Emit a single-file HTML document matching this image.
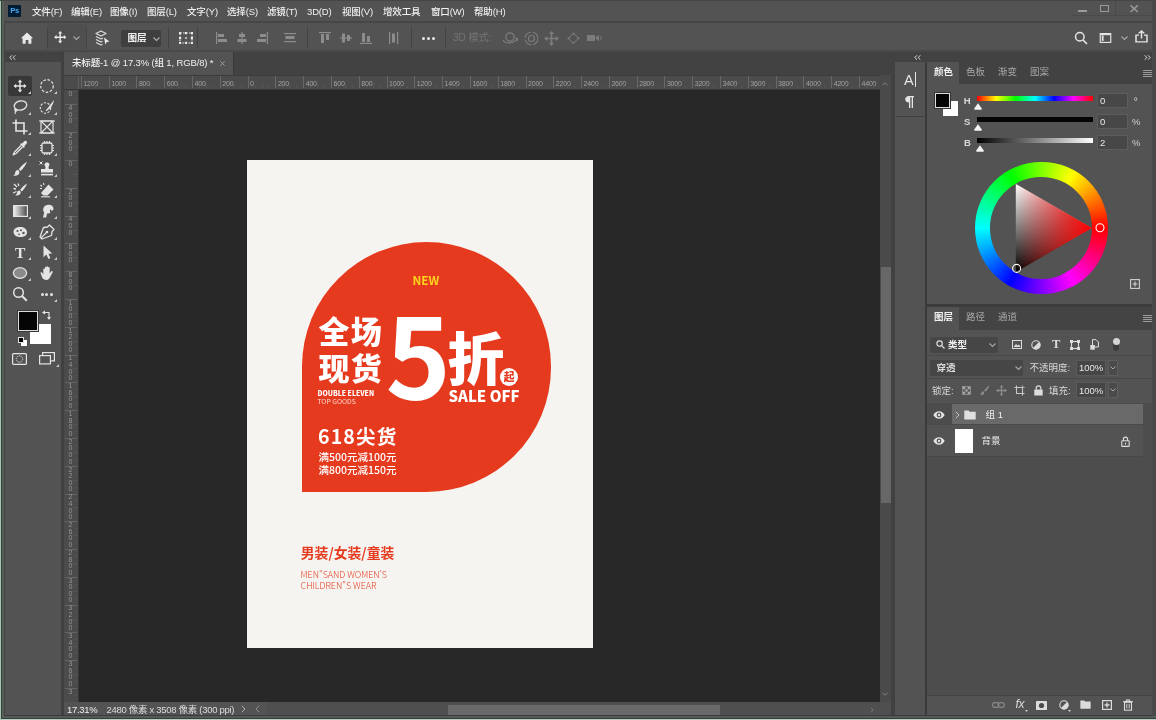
<!DOCTYPE html><html lang="zh"><head><meta charset="utf-8"><title>Photoshop</title><style>
*{box-sizing:border-box;margin:0;padding:0}
html,body{width:1156px;height:720px;overflow:hidden;background:#535353}
.t{will-change:opacity}
body{font-family:"Liberation Sans","Noto Sans CJK SC",sans-serif;font-size:11px;color:#dcdcdc;position:relative}
.a{position:absolute}
.t{position:absolute;white-space:nowrap;line-height:1}
svg{position:absolute;overflow:visible}
.sep{position:absolute;width:1px;background:#434343}
.dim{color:#8e8e8e}
</style></head><body>
<div class="a" style="left:0px;top:0px;width:1156px;height:720px;background:#535353;"></div>
<div class="a" style="left:0px;top:0px;width:1156px;height:22px;background:#535353;"></div>
<div class="a" style="left:0px;top:21px;width:1156px;height:1.7px;background:#464646;"></div>
<div class="a" style="left:8.2px;top:5px;width:13px;height:11.6px;background:#001c33;border-radius:1px"></div>
<div class="t" style="left:10.2px;top:6.8px;font-size:7.6px;color:#4aa8f0;font-weight:bold;letter-spacing:-0.3px">Ps</div>
<div class="t" style="left:32px;top:6.5px;font-size:9.5px;color:#f0f0f0;letter-spacing:-0.15px;font-weight:500">文件(F)</div>
<div class="t" style="left:71px;top:6.5px;font-size:9.5px;color:#f0f0f0;letter-spacing:-0.15px;font-weight:500">编辑(E)</div>
<div class="t" style="left:110px;top:6.5px;font-size:9.5px;color:#f0f0f0;letter-spacing:-0.15px;font-weight:500">图像(I)</div>
<div class="t" style="left:147px;top:6.5px;font-size:9.5px;color:#f0f0f0;letter-spacing:-0.15px;font-weight:500">图层(L)</div>
<div class="t" style="left:187px;top:6.5px;font-size:9.5px;color:#f0f0f0;letter-spacing:-0.15px;font-weight:500">文字(Y)</div>
<div class="t" style="left:227px;top:6.5px;font-size:9.5px;color:#f0f0f0;letter-spacing:-0.15px;font-weight:500">选择(S)</div>
<div class="t" style="left:267px;top:6.5px;font-size:9.5px;color:#f0f0f0;letter-spacing:-0.15px;font-weight:500">滤镜(T)</div>
<div class="t" style="left:307px;top:6.5px;font-size:9.5px;color:#f0f0f0;letter-spacing:-0.15px;font-weight:500">3D(D)</div>
<div class="t" style="left:342px;top:6.5px;font-size:9.5px;color:#f0f0f0;letter-spacing:-0.15px;font-weight:500">视图(V)</div>
<div class="t" style="left:383px;top:6.5px;font-size:9.5px;color:#f0f0f0;letter-spacing:-0.15px;font-weight:500">增效工具</div>
<div class="t" style="left:431px;top:6.5px;font-size:9.5px;color:#f0f0f0;letter-spacing:-0.15px;font-weight:500">窗口(W)</div>
<div class="t" style="left:474px;top:6.5px;font-size:9.5px;color:#f0f0f0;letter-spacing:-0.15px;font-weight:500">帮助(H)</div>
<div class="a" style="left:1077.5px;top:10px;width:9px;height:1.8px;background:#9a9a9a;"></div>
<div class="a" style="left:1100px;top:5.3px;width:9px;height:6.6px;border:1.2px solid #9a9a9a;border-top-width:1.8px"></div>
<svg style="left:1130px;top:4.6px" width="8.4" height="7.4" viewBox="0 0 8.4 7.4"><path d="M0.6 0.4L7.8 7M7.8 0.4L0.6 7" stroke="#9a9a9a" stroke-width="1.5" fill="none"/></svg>
<div class="a" style="left:1072px;top:15.3px;width:80px;height:0.7px;background:#4a4a4a;"></div>
<div class="a" style="left:1115px;top:0px;width:0.7px;height:16px;background:#4a4a4a;"></div>
<div class="a" style="left:0px;top:23px;width:1156px;height:29px;background:#535353;"></div>
<div class="a" style="left:0px;top:49.5px;width:1156px;height:2.5px;background:#494949;"></div>
<div class="sep" style="left:47px;top:27px;height:22px"></div>
<div class="sep" style="left:86px;top:27px;height:22px"></div>
<div class="sep" style="left:168px;top:27px;height:22px"></div>
<div class="sep" style="left:197px;top:27px;height:22px"></div>
<div class="sep" style="left:307px;top:27px;height:22px"></div>
<div class="sep" style="left:411px;top:27px;height:22px"></div>
<div class="sep" style="left:445px;top:27px;height:22px"></div>
<svg style="left:19.5px;top:31.7px" width="14" height="12.3" viewBox="0 0 15 14"><path d="M7.5 0.5L0.5 7H2.5V13.5H6V9H9V13.5H12.5V7H14.5Z" fill="#e8e8e8"/></svg>
<div class="a" style="left:48px;top:24px;width:38px;height:25px;background:#4f4f4f;"></div>
<svg style="left:53.7px;top:31.3px" width="12.4" height="12.4" viewBox="0 0 14 14"><path d="M7 0L9.4 2.9H7.8V6.2H11.1V4.6L14 7L11.1 9.4V7.8H7.8V11.1H9.4L7 14L4.6 11.1H6.2V7.8H2.9V9.4L0 7L2.9 4.6V6.2H6.2V2.9H4.6Z" fill="#e8e8e8"/></svg>
<svg style="left:73px;top:36px" width="7" height="5"><path d="M0.5 0.5L3.5 3.5L6.5 0.5" stroke="#a8a8a8" stroke-width="1.1" fill="none"/></svg>
<svg style="left:95px;top:30px" width="16" height="17" viewBox="0 0 16 17"><path d="M6 1L11 3.5L6 6L1 3.5Z M1 6.5L6 9L8 8M1 9.5L6 12L7.5 11.3M1 12.5L6 15L7.5 14.3" stroke="#dcdcdc" stroke-width="1.2" fill="none" stroke-linejoin="round"/><path d="M9 7.5L14.5 11.5L11.8 11.9L10.3 14.6Z" fill="#e8e8e8"/></svg>
<div class="a" style="left:121px;top:30px;width:40px;height:16.5px;background:#3f3f3f;border-radius:2px"></div>
<div class="t" style="left:127.5px;top:33.3px;font-size:9.6px;color:#f2f2f2;font-weight:bold">图层</div>
<svg style="left:153px;top:37px" width="7" height="5"><path d="M0.5 0.5L3.5 3.5L6.5 0.5" stroke="#b0b0b0" stroke-width="1.1" fill="none"/></svg>
<svg style="left:179px;top:32px" width="14" height="12" viewBox="0 0 14 12"><path d="M1 1H13V11H1Z" stroke="#dcdcdc" stroke-width="1.2" fill="none" stroke-dasharray="1.6 1.4"/><g fill="#e8e8e8"><rect x="0" y="0" width="2.2" height="2.2"/><rect x="11.8" y="0" width="2.2" height="2.2"/><rect x="0" y="9.8" width="2.2" height="2.2"/><rect x="11.8" y="9.8" width="2.2" height="2.2"/><rect x="5.9" y="0" width="2.2" height="2.2"/><rect x="5.9" y="9.8" width="2.2" height="2.2"/><rect x="0" y="4.9" width="2.2" height="2.2"/><rect x="11.8" y="4.9" width="2.2" height="2.2"/><rect x="6.2" y="5.2" width="1.6" height="1.6"/></g></svg>
<svg style="left:216px;top:32px" width="12" height="12" viewBox="0 0 12 12"><rect x="0" y="0" width="1.2" height="12" fill="#8c8c8c"/><rect x="2" y="2" width="6" height="3" fill="#8c8c8c"/><rect x="2" y="7" width="9" height="3" fill="#8c8c8c"/></svg>
<svg style="left:236px;top:32px" width="12" height="12" viewBox="0 0 12 12"><rect x="5.4" y="0" width="1.2" height="12" fill="#8c8c8c"/><rect x="3" y="2" width="6" height="3" fill="#8c8c8c"/><rect x="1.5" y="7" width="9" height="3" fill="#8c8c8c"/></svg>
<svg style="left:256px;top:32px" width="12" height="12" viewBox="0 0 12 12"><rect x="10.8" y="0" width="1.2" height="12" fill="#8c8c8c"/><rect x="4" y="2" width="6" height="3" fill="#8c8c8c"/><rect x="1" y="7" width="9" height="3" fill="#8c8c8c"/></svg>
<svg style="left:284px;top:32px" width="12" height="12" viewBox="0 0 12 12"><rect x="0" y="1" width="12" height="1.2" fill="#8c8c8c"/><rect x="1.5" y="4" width="9" height="3" fill="#8c8c8c"/><rect x="0" y="9" width="12" height="1.2" fill="#8c8c8c"/></svg>
<svg style="left:319px;top:32px" width="12" height="12" viewBox="0 0 12 12"><rect x="0" y="0" width="12" height="1.2" fill="#8c8c8c"/><rect x="2" y="2" width="3" height="9" fill="#8c8c8c"/><rect x="7" y="2" width="3" height="6" fill="#8c8c8c"/></svg>
<svg style="left:340px;top:32px" width="12" height="12" viewBox="0 0 12 12"><rect x="0" y="5.4" width="12" height="1.2" fill="#8c8c8c"/><rect x="2" y="1.5" width="3" height="9" fill="#8c8c8c"/><rect x="7" y="3" width="3" height="6" fill="#8c8c8c"/></svg>
<svg style="left:360px;top:32px" width="12" height="12" viewBox="0 0 12 12"><rect x="0" y="10.8" width="12" height="1.2" fill="#8c8c8c"/><rect x="2" y="1" width="3" height="9" fill="#8c8c8c"/><rect x="7" y="4" width="3" height="6" fill="#8c8c8c"/></svg>
<svg style="left:388px;top:32px" width="12" height="12" viewBox="0 0 12 12"><rect x="1" y="0" width="1.2" height="12" fill="#8c8c8c"/><rect x="4" y="1.5" width="3" height="9" fill="#8c8c8c"/><rect x="9" y="0" width="1.2" height="12" fill="#8c8c8c"/></svg>
<div class="a" style="left:422px;top:36.5px;width:3px;height:3px;border-radius:50%;background:#e8e8e8"></div>
<div class="a" style="left:427px;top:36.5px;width:3px;height:3px;border-radius:50%;background:#e8e8e8"></div>
<div class="a" style="left:432px;top:36.5px;width:3px;height:3px;border-radius:50%;background:#e8e8e8"></div>
<div class="t" style="left:453px;top:33px;font-size:10px;color:#757575;">3D 模式:</div>
<svg style="left:502px;top:31px" width="16" height="14" viewBox="0 0 16 14"><circle cx="8" cy="6" r="4.2" stroke="#7c7c7c" stroke-width="1.2" fill="none"/><path d="M1 9C3 13 12 13 15 8M13 7L15.5 7.5L15 10" stroke="#7c7c7c" stroke-width="1.2" fill="none"/></svg>
<svg style="left:524px;top:31px" width="15" height="15" viewBox="0 0 15 15"><circle cx="7.5" cy="7.5" r="6.3" stroke="#7c7c7c" stroke-width="1.2" fill="none" stroke-dasharray="8 2"/><circle cx="7.5" cy="7.5" r="3" stroke="#7c7c7c" stroke-width="1.2" fill="none"/></svg>
<svg style="left:544px;top:31px" width="15" height="15" viewBox="0 0 14 14"><path d="M7 0L9.4 2.9H7.8V6.2H11.1V4.6L14 7L11.1 9.4V7.8H7.8V11.1H9.4L7 14L4.6 11.1H6.2V7.8H2.9V9.4L0 7L2.9 4.6V6.2H6.2V2.9H4.6Z" fill="#7c7c7c"/></svg>
<svg style="left:566.5px;top:32px" width="13" height="12.5" viewBox="0 0 16 15"><path d="M8 1L14 7.5L8 14L2 7.5Z" stroke="#7c7c7c" stroke-width="1.2" fill="none"/><path d="M8 0L10 3H6ZM8 15L10 12H6ZM0 7.5L3 5.5V9.5ZM16 7.5L13 5.5V9.5Z" fill="#7c7c7c"/></svg>
<svg style="left:587px;top:34px" width="15" height="8" viewBox="0 0 15 8"><rect x="0" y="1" width="8" height="6" fill="#7c7c7c"/><path d="M8 4L12 1V7Z" fill="#7c7c7c"/><path d="M13 1.5C14.5 3 14.5 5 13 6.5" stroke="#7c7c7c" stroke-width="1" fill="none"/></svg>
<svg style="left:1074px;top:31px" width="14" height="14" viewBox="0 0 14 14"><circle cx="5.8" cy="5.8" r="4.3" stroke="#e4e4e4" stroke-width="1.5" fill="none"/><path d="M9 9L13 13" stroke="#e4e4e4" stroke-width="1.7"/></svg>
<svg style="left:1099px;top:33.2px" width="13" height="10" viewBox="0 0 14 12"><rect x="0.7" y="0.7" width="12.6" height="10.6" stroke="#e4e4e4" stroke-width="1.4" fill="none"/><rect x="2.5" y="3" width="2.2" height="6.5" fill="#e4e4e4"/><rect x="1" y="1" width="12" height="1.6" fill="#e4e4e4"/></svg>
<svg style="left:1120.5px;top:35.5px" width="7" height="5"><path d="M0.5 0.5L3.5 3.5L6.5 0.5" stroke="#a8a8a8" stroke-width="1.1" fill="none"/></svg>
<svg style="left:1135px;top:30.3px" width="13" height="12.8" viewBox="0 0 13 15" preserveAspectRatio="none"><path d="M4 6H1V14H12V6H9" stroke="#e4e4e4" stroke-width="1.5" fill="none"/><path d="M6.5 10V1.5M3.7 4L6.5 1.2L9.3 4" stroke="#e4e4e4" stroke-width="1.5" fill="none"/></svg>
<div class="a" style="left:3px;top:52px;width:60px;height:666px;background:#535353;"></div>
<div class="a" style="left:3px;top:52px;width:60px;height:10px;background:#424242;"></div>
<div class="a" style="left:61px;top:52px;width:3px;height:666px;background:#404040;"></div>
<svg style="left:9px;top:54.5px" width="7" height="5"><path d="M3 0.3L0.8 2.5L3 4.7M6.3 0.3L4.1 2.5L6.3 4.7" stroke="#dcdcdc" stroke-width="1" fill="none"/></svg>
<div class="a" style="left:8px;top:76px;width:24px;height:20px;background:#383838;border-radius:2px"></div>
<svg style="left:12.0px;top:78.0px" width="16" height="16" viewBox="0 0 16 16"><path transform="translate(1.5 1.5) scale(0.93)" d="M7 0L9.4 2.9H7.8V6.2H11.1V4.6L14 7L11.1 9.4V7.8H7.8V11.1H9.4L7 14L4.6 11.1H6.2V7.8H2.9V9.4L0 7L2.9 4.6V6.2H6.2V2.9H4.6Z" fill="#e4e4e4"/></svg>
<svg style="left:27.5px;top:91px" width="3" height="3"><path d="M3 0V3H0Z" fill="#c8c8c8"/></svg>
<svg style="left:38.5px;top:78.0px" width="16" height="16" viewBox="0 0 16 16"><ellipse cx="8" cy="8" rx="6.3" ry="6.3" stroke="#e4e4e4" stroke-width="1.2" fill="none" stroke-dasharray="2.6 1.6"/></svg>
<svg style="left:54.0px;top:91px" width="3" height="3"><path d="M3 0V3H0Z" fill="#c8c8c8"/></svg>
<svg style="left:12.0px;top:99.0px" width="16" height="16" viewBox="0 0 16 16"><ellipse cx="8.5" cy="6.5" rx="6.3" ry="4.6" stroke="#e4e4e4" stroke-width="1.3" fill="none" transform="rotate(-12 8.5 6.5)"/><path d="M3.5 9.5C2 11 3.2 12.5 4.5 12C5.5 11.5 4.8 10 3.8 10.6C3 11.4 3.5 13.5 3 15" stroke="#e4e4e4" stroke-width="1.1" fill="none"/></svg>
<svg style="left:27.5px;top:112px" width="3" height="3"><path d="M3 0V3H0Z" fill="#c8c8c8"/></svg>
<svg style="left:38.5px;top:99.0px" width="16" height="16" viewBox="0 0 16 16"><ellipse cx="6.5" cy="9" rx="5.2" ry="5.2" stroke="#e4e4e4" stroke-width="1.1" fill="none" stroke-dasharray="2.2 1.5"/><path d="M15 1C13 3.5 11 6 9.2 8.6L7.2 10.8C6.4 11.8 7 12.4 8 11.8L10.6 9.8C13 7.5 14.5 4.5 15 1Z" fill="#e4e4e4"/></svg>
<svg style="left:54.0px;top:112px" width="3" height="3"><path d="M3 0V3H0Z" fill="#c8c8c8"/></svg>
<svg style="left:12.0px;top:119.0px" width="16" height="16" viewBox="0 0 16 16"><path d="M4 0.5V12H15.5M0.5 4H12V15.5" stroke="#e4e4e4" stroke-width="1.6" fill="none"/></svg>
<svg style="left:27.5px;top:132px" width="3" height="3"><path d="M3 0V3H0Z" fill="#c8c8c8"/></svg>
<svg style="left:38.5px;top:119.0px" width="16" height="16" viewBox="0 0 16 16"><rect x="2" y="2" width="12" height="12" stroke="#e4e4e4" stroke-width="1.2" fill="none"/><path d="M2 2L14 14M14 2L2 14M0 2H16M0 14H16" stroke="#e4e4e4" stroke-width="1.1" fill="none"/></svg>
<svg style="left:12.0px;top:140.0px" width="16" height="16" viewBox="0 0 16 16"><path d="M13.8 0.8C15.2 1.2 15.4 3 14.4 4L12.3 6.1L12.9 6.8L11.8 7.9L8.1 4.2L9.2 3.1L9.9 3.7L12 1.6C12.5 1 13.2 0.7 13.8 0.8Z" fill="#e4e4e4"/><path d="M9 5.5L2.5 12L1.2 14.8L4 13.5L10.5 7" stroke="#e4e4e4" stroke-width="1.3" fill="none" stroke-linejoin="round"/></svg>
<svg style="left:27.5px;top:153px" width="3" height="3"><path d="M3 0V3H0Z" fill="#c8c8c8"/></svg>
<svg style="left:38.5px;top:140.0px" width="16" height="16" viewBox="0 0 16 16"><rect x="3" y="3" width="10" height="10" rx="1.5" stroke="#e4e4e4" stroke-width="1.3" fill="none"/><path d="M5.5 1V3M8 1V3M10.5 1V3M5.5 13V15M8 13V15M10.5 13V15M1 5.5H3M1 8H3M1 10.5H3M13 5.5H15M13 8H15M13 10.5H15" stroke="#e4e4e4" stroke-width="1.2"/></svg>
<svg style="left:54.0px;top:153px" width="3" height="3"><path d="M3 0V3H0Z" fill="#c8c8c8"/></svg>
<svg style="left:12.0px;top:161.0px" width="16" height="16" viewBox="0 0 16 16"><path d="M15 0.8C12 2.5 9 5.5 6.8 8.2L8.6 10C11.2 7.6 13.8 4.4 15 0.8Z" fill="#e4e4e4"/><path d="M6 9C4 9 3.3 10.5 3.1 12C3 13.3 2.2 14.2 1 14.6C3.5 15.3 6.3 14.6 7.2 12.6C7.8 11.2 7.2 9.6 6 9Z" fill="#e4e4e4"/></svg>
<svg style="left:27.5px;top:174px" width="3" height="3"><path d="M3 0V3H0Z" fill="#c8c8c8"/></svg>
<svg style="left:38.5px;top:161.0px" width="16" height="16" viewBox="0 0 16 16"><path d="M6.2 5.2C5 4 5.5 1.5 8 1.5C10.5 1.5 11 4 9.8 5.2C9.3 6.2 9.5 7.4 10 8H14V11.5H2V8H6C6.5 7.4 6.7 6.2 6.2 5.2Z" fill="#e4e4e4"/><rect x="2" y="12.8" width="12" height="1.6" fill="#e4e4e4"/><path d="M0.5 0.5L3.5 3.5M3.5 0.5L0.5 3.5" stroke="#e4e4e4" stroke-width="1"/></svg>
<svg style="left:54.0px;top:174px" width="3" height="3"><path d="M3 0V3H0Z" fill="#c8c8c8"/></svg>
<svg style="left:12.0px;top:182.0px" width="16" height="16" viewBox="0 0 16 16"><path d="M15 1.5C12.5 3 10 5.5 8.2 7.8L9.8 9.4C12 7.2 14 4.6 15 1.5Z" fill="#e4e4e4"/><path d="M7.5 8.5C5.8 8.5 5.2 9.8 5 11C4.9 12 4.2 12.8 3.2 13.2C5.3 13.8 7.7 13.2 8.5 11.5C9 10.3 8.5 9 7.5 8.5Z" fill="#e4e4e4"/><path d="M2 2L5 5M6 1.5L7 4M1.5 6.5L4 7" stroke="#e4e4e4" stroke-width="1.3"/><path d="M1 11L4.5 9.5" stroke="#e4e4e4" stroke-width="1.2"/></svg>
<svg style="left:27.5px;top:195px" width="3" height="3"><path d="M3 0V3H0Z" fill="#c8c8c8"/></svg>
<svg style="left:38.5px;top:182.0px" width="16" height="16" viewBox="0 0 16 16"><path d="M9.5 2.5L14.5 7.5L8.5 13.5H4.5L2 11Z" fill="#e4e4e4"/><path d="M2 14.8H11" stroke="#e4e4e4" stroke-width="1.1"/><path d="M1.5 3L3 4.5M4.5 1L5 3M1 6.5L3 6.5" stroke="#e4e4e4" stroke-width="1.1"/></svg>
<svg style="left:54.0px;top:195px" width="3" height="3"><path d="M3 0V3H0Z" fill="#c8c8c8"/></svg>
<svg style="left:12.5px;top:205px" width="15" height="12"><defs><linearGradient id="gg" x1="0" x2="1" y1="0" y2="0"><stop offset="0" stop-color="#f0f0f0"/><stop offset="1" stop-color="#4a4a4a"/></linearGradient></defs><rect x="0.6" y="0.6" width="13.8" height="10.8" fill="url(#gg)" stroke="#e4e4e4" stroke-width="1.2"/></svg>
<svg style="left:27.5px;top:216px" width="3" height="3"><path d="M3 0V3H0Z" fill="#c8c8c8"/></svg>
<svg style="left:38.5px;top:203.0px" width="16" height="16" viewBox="0 0 16 16"><path d="M4 14.5L5.2 9.5C3.5 7.5 4 4 6.5 2.5C9 1 12.5 1.5 13.8 3.5C15 5.5 14.5 7 13.5 7.5C12.5 8 11.6 7.2 11.8 6.2C10.5 6.5 10.5 8.5 11.5 9.2C10.5 10.6 9 10.8 8 10.4L7.2 14.5Z" fill="#e4e4e4"/></svg>
<svg style="left:54.0px;top:216px" width="3" height="3"><path d="M3 0V3H0Z" fill="#c8c8c8"/></svg>
<svg style="left:12.0px;top:224.0px" width="16" height="16" viewBox="0 0 16 16"><path d="M1.5 8C1.5 4.5 4.5 3 8 3C12 3 15 5 15 8.5C15 11.5 12 13 8.5 13C4.5 13 1.5 11 1.5 8Z" fill="#e4e4e4"/><circle cx="5.5" cy="7" r="1.1" fill="#535353"/><circle cx="9" cy="6.2" r="1" fill="#535353"/><circle cx="11.5" cy="9" r="1.2" fill="#535353"/><circle cx="7" cy="10.3" r="0.9" fill="#535353"/></svg>
<svg style="left:27.5px;top:237px" width="3" height="3"><path d="M3 0V3H0Z" fill="#c8c8c8"/></svg>
<svg style="left:38.5px;top:224.0px" width="16" height="16" viewBox="0 0 16 16"><path d="M10.5 1L15 5.5L13 7.5L12.5 11.5L3 15L1 13L4.5 3.5L8.5 3Z" stroke="#e4e4e4" stroke-width="1.3" fill="none" stroke-linejoin="round"/><path d="M2 14L7.5 8.5" stroke="#e4e4e4" stroke-width="1.1"/><circle cx="8" cy="8" r="1.3" fill="#e4e4e4"/></svg>
<svg style="left:54.0px;top:237px" width="3" height="3"><path d="M3 0V3H0Z" fill="#c8c8c8"/></svg>
<div class="t" style="left:15px;top:244.5px;font-family:'Liberation Serif',serif;font-size:15.5px;font-weight:bold;color:#e4e4e4">T</div>
<svg style="left:27.5px;top:257px" width="3" height="3"><path d="M3 0V3H0Z" fill="#c8c8c8"/></svg>
<svg style="left:38.5px;top:244.0px" width="16" height="16" viewBox="0 0 16 16"><path d="M4.5 1.5V13.2L7.4 10.6L9.4 15L11.4 14.1L9.4 9.8L13.2 9.6Z" fill="#e4e4e4"/></svg>
<svg style="left:54.0px;top:257px" width="3" height="3"><path d="M3 0V3H0Z" fill="#c8c8c8"/></svg>
<svg style="left:12.0px;top:265.0px" width="16" height="16" viewBox="0 0 16 16"><ellipse cx="8" cy="8" rx="6.6" ry="5.3" fill="#8a8a8a" stroke="#e4e4e4" stroke-width="1.3"/></svg>
<svg style="left:27.5px;top:278px" width="3" height="3"><path d="M3 0V3H0Z" fill="#c8c8c8"/></svg>
<svg style="left:38.5px;top:265.0px" width="16" height="16" viewBox="0 0 16 16"><path d="M4.3 9.5V4.2C4.3 3.2 5.9 3.2 5.9 4.2V2.6C5.9 1.6 7.5 1.6 7.5 2.6V2C7.5 1 9.1 1 9.1 2V2.8C9.1 1.8 10.7 1.8 10.7 2.8V8.2L12.2 6.4C13 5.5 14.3 6.4 13.6 7.5L11 12.2C10.3 13.8 9.2 15 7.4 15C5 15 3.4 13.6 2.8 11.6L1.6 8.2C1.3 7.2 2.6 6.8 3.1 7.6Z" fill="#e4e4e4"/></svg>
<svg style="left:12.0px;top:286.0px" width="16" height="16" viewBox="0 0 16 16"><circle cx="6.5" cy="6.5" r="4.8" stroke="#e4e4e4" stroke-width="1.5" fill="none"/><path d="M10 10L14.8 14.8" stroke="#e4e4e4" stroke-width="2"/></svg>
<div class="a" style="left:40.5px;top:292.5px;width:3px;height:3px;border-radius:50%;background:#e4e4e4"></div>
<div class="a" style="left:45.3px;top:292.5px;width:3px;height:3px;border-radius:50%;background:#e4e4e4"></div>
<div class="a" style="left:50.1px;top:292.5px;width:3px;height:3px;border-radius:50%;background:#e4e4e4"></div>
<svg style="left:54.0px;top:299px" width="3" height="3"><path d="M3 0V3H0Z" fill="#c8c8c8"/></svg>
<div class="a" style="left:30px;top:323.5px;width:20.5px;height:20px;background:#ffffff;"></div>
<div class="a" style="left:18px;top:311px;width:20px;height:19.5px;background:#050505;border:1.2px solid #dcdcdc;box-shadow:0 0 0 1px #3a3a3a"></div>
<svg style="left:42px;top:310px" width="10" height="10" viewBox="0 0 10 10"><path d="M2 2.5H7V8" stroke="#e4e4e4" stroke-width="1.1" fill="none"/><path d="M0 2.5L3 0.5V4.5ZM7 10L5 7H9Z" fill="#e4e4e4"/></svg>
<div class="a" style="left:21px;top:340px;width:5.5px;height:5.5px;background:#ffffff;"></div>
<div class="a" style="left:17.5px;top:336.5px;width:6px;height:6px;background:#050505;border:1px solid #e0e0e0"></div>
<svg style="left:12px;top:353px" width="15" height="12" viewBox="0 0 15 12"><rect x="0.6" y="0.6" width="13.8" height="10.8" rx="1" stroke="#e4e4e4" stroke-width="1.2" fill="none"/><circle cx="7.5" cy="6" r="3.2" stroke="#e4e4e4" stroke-width="1" fill="none" stroke-dasharray="1.4 1"/></svg>
<svg style="left:39px;top:352px" width="16" height="13" viewBox="0 0 16 13"><rect x="3.6" y="0.6" width="11.8" height="8.3" stroke="#e4e4e4" stroke-width="1.2" fill="#535353"/><rect x="0.6" y="3.6" width="10.8" height="8.3" stroke="#e4e4e4" stroke-width="1.2" fill="#535353"/></svg>
<svg style="left:56px;top:364px" width="3" height="3"><path d="M3 0V3H0Z" fill="#c8c8c8"/></svg>
<div class="a" style="left:64px;top:52px;width:830px;height:23px;background:#424242;"></div>
<div class="a" style="left:64px;top:52px;width:169px;height:23px;background:#535353;"></div>
<div class="a" style="left:233px;top:52px;width:1px;height:23px;background:#383838;"></div>
<div class="t" style="left:72px;top:58px;font-size:9.5px;color:#f0f0f0;letter-spacing:-0.14px;font-weight:500">未标题-1 @ 17.3% (组 1, RGB/8) *</div>
<svg style="left:220px;top:61px" width="5" height="5"><path d="M0.3 0.3L4.7 4.7M4.7 0.3L0.3 4.7" stroke="#a4a4a4" stroke-width="0.9" fill="none"/></svg>
<div class="a" style="left:64px;top:75px;width:816px;height:627px;background:#282828;"></div>
<div class="a" style="left:64px;top:75px;width:816px;height:14.5px;background:#4b4b4b;"></div>
<div class="a" style="left:64px;top:75px;width:14.5px;height:627px;background:#4b4b4b;"></div>
<div class="a" style="left:64px;top:88.5px;width:816px;height:1px;background:#383838;"></div>
<div class="a" style="left:77.5px;top:75px;width:1px;height:627px;background:#383838;"></div>
<div class="a" style="left:64px;top:75px;width:816px;height:0.7px;background:#3c3c3c;"></div>
<div class="a" style="left:80.9px;top:76px;width:1px;height:12px;background:#686868;"></div>
<div class="t" style="left:83.4px;top:80px;font-size:7px;color:#a2a2a2;letter-spacing:-0.2px">1200</div>
<div class="a" style="left:87.8px;top:86px;width:1px;height:2px;background:#575757;"></div>
<div class="a" style="left:94.8px;top:84px;width:1px;height:4px;background:#575757;"></div>
<div class="a" style="left:101.7px;top:86px;width:1px;height:2px;background:#575757;"></div>
<div class="a" style="left:108.7px;top:76px;width:1px;height:12px;background:#686868;"></div>
<div class="t" style="left:111.2px;top:80px;font-size:7px;color:#a2a2a2;letter-spacing:-0.2px">1000</div>
<div class="a" style="left:115.6px;top:86px;width:1px;height:2px;background:#575757;"></div>
<div class="a" style="left:122.5px;top:84px;width:1px;height:4px;background:#575757;"></div>
<div class="a" style="left:129.5px;top:86px;width:1px;height:2px;background:#575757;"></div>
<div class="a" style="left:136.4px;top:76px;width:1px;height:12px;background:#686868;"></div>
<div class="t" style="left:138.9px;top:80px;font-size:7px;color:#a2a2a2;letter-spacing:-0.2px">800</div>
<div class="a" style="left:143.4px;top:86px;width:1px;height:2px;background:#575757;"></div>
<div class="a" style="left:150.3px;top:84px;width:1px;height:4px;background:#575757;"></div>
<div class="a" style="left:157.3px;top:86px;width:1px;height:2px;background:#575757;"></div>
<div class="a" style="left:164.2px;top:76px;width:1px;height:12px;background:#686868;"></div>
<div class="t" style="left:166.7px;top:80px;font-size:7px;color:#a2a2a2;letter-spacing:-0.2px">600</div>
<div class="a" style="left:171.2px;top:86px;width:1px;height:2px;background:#575757;"></div>
<div class="a" style="left:178.1px;top:84px;width:1px;height:4px;background:#575757;"></div>
<div class="a" style="left:185.1px;top:86px;width:1px;height:2px;background:#575757;"></div>
<div class="a" style="left:192.0px;top:76px;width:1px;height:12px;background:#686868;"></div>
<div class="t" style="left:194.5px;top:80px;font-size:7px;color:#a2a2a2;letter-spacing:-0.2px">400</div>
<div class="a" style="left:199.0px;top:86px;width:1px;height:2px;background:#575757;"></div>
<div class="a" style="left:205.9px;top:84px;width:1px;height:4px;background:#575757;"></div>
<div class="a" style="left:212.9px;top:86px;width:1px;height:2px;background:#575757;"></div>
<div class="a" style="left:219.8px;top:76px;width:1px;height:12px;background:#686868;"></div>
<div class="t" style="left:222.3px;top:80px;font-size:7px;color:#a2a2a2;letter-spacing:-0.2px">200</div>
<div class="a" style="left:226.8px;top:86px;width:1px;height:2px;background:#575757;"></div>
<div class="a" style="left:233.7px;top:84px;width:1px;height:4px;background:#575757;"></div>
<div class="a" style="left:240.7px;top:86px;width:1px;height:2px;background:#575757;"></div>
<div class="a" style="left:247.6px;top:76px;width:1px;height:12px;background:#686868;"></div>
<div class="t" style="left:250.1px;top:80px;font-size:7px;color:#a2a2a2;letter-spacing:-0.2px">0</div>
<div class="a" style="left:254.5px;top:86px;width:1px;height:2px;background:#575757;"></div>
<div class="a" style="left:261.5px;top:84px;width:1px;height:4px;background:#575757;"></div>
<div class="a" style="left:268.4px;top:86px;width:1px;height:2px;background:#575757;"></div>
<div class="a" style="left:275.4px;top:76px;width:1px;height:12px;background:#686868;"></div>
<div class="t" style="left:277.9px;top:80px;font-size:7px;color:#a2a2a2;letter-spacing:-0.2px">200</div>
<div class="a" style="left:282.3px;top:86px;width:1px;height:2px;background:#575757;"></div>
<div class="a" style="left:289.3px;top:84px;width:1px;height:4px;background:#575757;"></div>
<div class="a" style="left:296.2px;top:86px;width:1px;height:2px;background:#575757;"></div>
<div class="a" style="left:303.2px;top:76px;width:1px;height:12px;background:#686868;"></div>
<div class="t" style="left:305.7px;top:80px;font-size:7px;color:#a2a2a2;letter-spacing:-0.2px">400</div>
<div class="a" style="left:310.1px;top:86px;width:1px;height:2px;background:#575757;"></div>
<div class="a" style="left:317.1px;top:84px;width:1px;height:4px;background:#575757;"></div>
<div class="a" style="left:324.0px;top:86px;width:1px;height:2px;background:#575757;"></div>
<div class="a" style="left:331.0px;top:76px;width:1px;height:12px;background:#686868;"></div>
<div class="t" style="left:333.5px;top:80px;font-size:7px;color:#a2a2a2;letter-spacing:-0.2px">600</div>
<div class="a" style="left:337.9px;top:86px;width:1px;height:2px;background:#575757;"></div>
<div class="a" style="left:344.9px;top:84px;width:1px;height:4px;background:#575757;"></div>
<div class="a" style="left:351.8px;top:86px;width:1px;height:2px;background:#575757;"></div>
<div class="a" style="left:358.8px;top:76px;width:1px;height:12px;background:#686868;"></div>
<div class="t" style="left:361.3px;top:80px;font-size:7px;color:#a2a2a2;letter-spacing:-0.2px">800</div>
<div class="a" style="left:365.7px;top:86px;width:1px;height:2px;background:#575757;"></div>
<div class="a" style="left:372.7px;top:84px;width:1px;height:4px;background:#575757;"></div>
<div class="a" style="left:379.6px;top:86px;width:1px;height:2px;background:#575757;"></div>
<div class="a" style="left:386.5px;top:76px;width:1px;height:12px;background:#686868;"></div>
<div class="t" style="left:389.0px;top:80px;font-size:7px;color:#a2a2a2;letter-spacing:-0.2px">1000</div>
<div class="a" style="left:393.5px;top:86px;width:1px;height:2px;background:#575757;"></div>
<div class="a" style="left:400.4px;top:84px;width:1px;height:4px;background:#575757;"></div>
<div class="a" style="left:407.4px;top:86px;width:1px;height:2px;background:#575757;"></div>
<div class="a" style="left:414.3px;top:76px;width:1px;height:12px;background:#686868;"></div>
<div class="t" style="left:416.8px;top:80px;font-size:7px;color:#a2a2a2;letter-spacing:-0.2px">1200</div>
<div class="a" style="left:421.3px;top:86px;width:1px;height:2px;background:#575757;"></div>
<div class="a" style="left:428.2px;top:84px;width:1px;height:4px;background:#575757;"></div>
<div class="a" style="left:435.2px;top:86px;width:1px;height:2px;background:#575757;"></div>
<div class="a" style="left:442.1px;top:76px;width:1px;height:12px;background:#686868;"></div>
<div class="t" style="left:444.6px;top:80px;font-size:7px;color:#a2a2a2;letter-spacing:-0.2px">1400</div>
<div class="a" style="left:449.1px;top:86px;width:1px;height:2px;background:#575757;"></div>
<div class="a" style="left:456.0px;top:84px;width:1px;height:4px;background:#575757;"></div>
<div class="a" style="left:463.0px;top:86px;width:1px;height:2px;background:#575757;"></div>
<div class="a" style="left:469.9px;top:76px;width:1px;height:12px;background:#686868;"></div>
<div class="t" style="left:472.4px;top:80px;font-size:7px;color:#a2a2a2;letter-spacing:-0.2px">1600</div>
<div class="a" style="left:476.9px;top:86px;width:1px;height:2px;background:#575757;"></div>
<div class="a" style="left:483.8px;top:84px;width:1px;height:4px;background:#575757;"></div>
<div class="a" style="left:490.8px;top:86px;width:1px;height:2px;background:#575757;"></div>
<div class="a" style="left:497.7px;top:76px;width:1px;height:12px;background:#686868;"></div>
<div class="t" style="left:500.2px;top:80px;font-size:7px;color:#a2a2a2;letter-spacing:-0.2px">1800</div>
<div class="a" style="left:504.7px;top:86px;width:1px;height:2px;background:#575757;"></div>
<div class="a" style="left:511.6px;top:84px;width:1px;height:4px;background:#575757;"></div>
<div class="a" style="left:518.6px;top:86px;width:1px;height:2px;background:#575757;"></div>
<div class="a" style="left:525.5px;top:76px;width:1px;height:12px;background:#686868;"></div>
<div class="t" style="left:528.0px;top:80px;font-size:7px;color:#a2a2a2;letter-spacing:-0.2px">2000</div>
<div class="a" style="left:532.4px;top:86px;width:1px;height:2px;background:#575757;"></div>
<div class="a" style="left:539.4px;top:84px;width:1px;height:4px;background:#575757;"></div>
<div class="a" style="left:546.3px;top:86px;width:1px;height:2px;background:#575757;"></div>
<div class="a" style="left:553.3px;top:76px;width:1px;height:12px;background:#686868;"></div>
<div class="t" style="left:555.8px;top:80px;font-size:7px;color:#a2a2a2;letter-spacing:-0.2px">2200</div>
<div class="a" style="left:560.2px;top:86px;width:1px;height:2px;background:#575757;"></div>
<div class="a" style="left:567.2px;top:84px;width:1px;height:4px;background:#575757;"></div>
<div class="a" style="left:574.1px;top:86px;width:1px;height:2px;background:#575757;"></div>
<div class="a" style="left:581.1px;top:76px;width:1px;height:12px;background:#686868;"></div>
<div class="t" style="left:583.6px;top:80px;font-size:7px;color:#a2a2a2;letter-spacing:-0.2px">2400</div>
<div class="a" style="left:588.0px;top:86px;width:1px;height:2px;background:#575757;"></div>
<div class="a" style="left:595.0px;top:84px;width:1px;height:4px;background:#575757;"></div>
<div class="a" style="left:601.9px;top:86px;width:1px;height:2px;background:#575757;"></div>
<div class="a" style="left:608.9px;top:76px;width:1px;height:12px;background:#686868;"></div>
<div class="t" style="left:611.4px;top:80px;font-size:7px;color:#a2a2a2;letter-spacing:-0.2px">2600</div>
<div class="a" style="left:615.8px;top:86px;width:1px;height:2px;background:#575757;"></div>
<div class="a" style="left:622.8px;top:84px;width:1px;height:4px;background:#575757;"></div>
<div class="a" style="left:629.7px;top:86px;width:1px;height:2px;background:#575757;"></div>
<div class="a" style="left:636.7px;top:76px;width:1px;height:12px;background:#686868;"></div>
<div class="t" style="left:639.2px;top:80px;font-size:7px;color:#a2a2a2;letter-spacing:-0.2px">2800</div>
<div class="a" style="left:643.6px;top:86px;width:1px;height:2px;background:#575757;"></div>
<div class="a" style="left:650.6px;top:84px;width:1px;height:4px;background:#575757;"></div>
<div class="a" style="left:657.5px;top:86px;width:1px;height:2px;background:#575757;"></div>
<div class="a" style="left:664.4px;top:76px;width:1px;height:12px;background:#686868;"></div>
<div class="t" style="left:666.9px;top:80px;font-size:7px;color:#a2a2a2;letter-spacing:-0.2px">3000</div>
<div class="a" style="left:671.4px;top:86px;width:1px;height:2px;background:#575757;"></div>
<div class="a" style="left:678.3px;top:84px;width:1px;height:4px;background:#575757;"></div>
<div class="a" style="left:685.3px;top:86px;width:1px;height:2px;background:#575757;"></div>
<div class="a" style="left:692.2px;top:76px;width:1px;height:12px;background:#686868;"></div>
<div class="t" style="left:694.7px;top:80px;font-size:7px;color:#a2a2a2;letter-spacing:-0.2px">3200</div>
<div class="a" style="left:699.2px;top:86px;width:1px;height:2px;background:#575757;"></div>
<div class="a" style="left:706.1px;top:84px;width:1px;height:4px;background:#575757;"></div>
<div class="a" style="left:713.1px;top:86px;width:1px;height:2px;background:#575757;"></div>
<div class="a" style="left:720.0px;top:76px;width:1px;height:12px;background:#686868;"></div>
<div class="t" style="left:722.5px;top:80px;font-size:7px;color:#a2a2a2;letter-spacing:-0.2px">3400</div>
<div class="a" style="left:727.0px;top:86px;width:1px;height:2px;background:#575757;"></div>
<div class="a" style="left:733.9px;top:84px;width:1px;height:4px;background:#575757;"></div>
<div class="a" style="left:740.9px;top:86px;width:1px;height:2px;background:#575757;"></div>
<div class="a" style="left:747.8px;top:76px;width:1px;height:12px;background:#686868;"></div>
<div class="t" style="left:750.3px;top:80px;font-size:7px;color:#a2a2a2;letter-spacing:-0.2px">3600</div>
<div class="a" style="left:754.8px;top:86px;width:1px;height:2px;background:#575757;"></div>
<div class="a" style="left:761.7px;top:84px;width:1px;height:4px;background:#575757;"></div>
<div class="a" style="left:768.7px;top:86px;width:1px;height:2px;background:#575757;"></div>
<div class="a" style="left:775.6px;top:76px;width:1px;height:12px;background:#686868;"></div>
<div class="t" style="left:778.1px;top:80px;font-size:7px;color:#a2a2a2;letter-spacing:-0.2px">3800</div>
<div class="a" style="left:782.6px;top:86px;width:1px;height:2px;background:#575757;"></div>
<div class="a" style="left:789.5px;top:84px;width:1px;height:4px;background:#575757;"></div>
<div class="a" style="left:796.5px;top:86px;width:1px;height:2px;background:#575757;"></div>
<div class="a" style="left:803.4px;top:76px;width:1px;height:12px;background:#686868;"></div>
<div class="t" style="left:805.9px;top:80px;font-size:7px;color:#a2a2a2;letter-spacing:-0.2px">4000</div>
<div class="a" style="left:810.3px;top:86px;width:1px;height:2px;background:#575757;"></div>
<div class="a" style="left:817.3px;top:84px;width:1px;height:4px;background:#575757;"></div>
<div class="a" style="left:824.2px;top:86px;width:1px;height:2px;background:#575757;"></div>
<div class="a" style="left:831.2px;top:76px;width:1px;height:12px;background:#686868;"></div>
<div class="t" style="left:833.7px;top:80px;font-size:7px;color:#a2a2a2;letter-spacing:-0.2px">4200</div>
<div class="a" style="left:838.1px;top:86px;width:1px;height:2px;background:#575757;"></div>
<div class="a" style="left:845.1px;top:84px;width:1px;height:4px;background:#575757;"></div>
<div class="a" style="left:852.0px;top:86px;width:1px;height:2px;background:#575757;"></div>
<div class="a" style="left:859.0px;top:76px;width:1px;height:12px;background:#686868;"></div>
<div class="t" style="left:861.5px;top:80px;font-size:7px;color:#a2a2a2;letter-spacing:-0.2px">4400</div>
<div class="a" style="left:865.9px;top:86px;width:1px;height:2px;background:#575757;"></div>
<div class="a" style="left:872.9px;top:84px;width:1px;height:4px;background:#575757;"></div>
<div class="t" style="left:68.5px;top:89.6px;font-size:7px;color:#969696">0</div>
<div class="a" style="left:73px;top:90.5px;width:4px;height:1px;background:#575757;"></div>
<div class="a" style="left:75px;top:97.5px;width:2px;height:1px;background:#575757;"></div>
<div class="a" style="left:65px;top:104.4px;width:12px;height:1px;background:#646464;"></div>
<div class="t" style="left:68.5px;top:104.2px;font-size:7px;color:#969696">4</div>
<div class="t" style="left:68.5px;top:110.8px;font-size:7px;color:#969696">0</div>
<div class="t" style="left:68.5px;top:117.4px;font-size:7px;color:#969696">0</div>
<div class="a" style="left:75px;top:111.4px;width:2px;height:1px;background:#575757;"></div>
<div class="a" style="left:73px;top:118.3px;width:4px;height:1px;background:#575757;"></div>
<div class="a" style="left:75px;top:125.3px;width:2px;height:1px;background:#575757;"></div>
<div class="a" style="left:65px;top:132.2px;width:12px;height:1px;background:#646464;"></div>
<div class="t" style="left:68.5px;top:132.0px;font-size:7px;color:#969696">2</div>
<div class="t" style="left:68.5px;top:138.6px;font-size:7px;color:#969696">0</div>
<div class="t" style="left:68.5px;top:145.2px;font-size:7px;color:#969696">0</div>
<div class="a" style="left:75px;top:139.2px;width:2px;height:1px;background:#575757;"></div>
<div class="a" style="left:73px;top:146.1px;width:4px;height:1px;background:#575757;"></div>
<div class="a" style="left:75px;top:153.1px;width:2px;height:1px;background:#575757;"></div>
<div class="a" style="left:65px;top:160.0px;width:12px;height:1px;background:#646464;"></div>
<div class="t" style="left:68.5px;top:159.8px;font-size:7px;color:#969696">0</div>
<div class="a" style="left:75px;top:166.9px;width:2px;height:1px;background:#575757;"></div>
<div class="a" style="left:73px;top:173.9px;width:4px;height:1px;background:#575757;"></div>
<div class="a" style="left:75px;top:180.8px;width:2px;height:1px;background:#575757;"></div>
<div class="a" style="left:65px;top:187.8px;width:12px;height:1px;background:#646464;"></div>
<div class="t" style="left:68.5px;top:187.6px;font-size:7px;color:#969696">2</div>
<div class="t" style="left:68.5px;top:194.2px;font-size:7px;color:#969696">0</div>
<div class="t" style="left:68.5px;top:200.8px;font-size:7px;color:#969696">0</div>
<div class="a" style="left:75px;top:194.7px;width:2px;height:1px;background:#575757;"></div>
<div class="a" style="left:73px;top:201.7px;width:4px;height:1px;background:#575757;"></div>
<div class="a" style="left:75px;top:208.6px;width:2px;height:1px;background:#575757;"></div>
<div class="a" style="left:65px;top:215.6px;width:12px;height:1px;background:#646464;"></div>
<div class="t" style="left:68.5px;top:215.4px;font-size:7px;color:#969696">4</div>
<div class="t" style="left:68.5px;top:222.0px;font-size:7px;color:#969696">0</div>
<div class="t" style="left:68.5px;top:228.6px;font-size:7px;color:#969696">0</div>
<div class="a" style="left:75px;top:222.5px;width:2px;height:1px;background:#575757;"></div>
<div class="a" style="left:73px;top:229.5px;width:4px;height:1px;background:#575757;"></div>
<div class="a" style="left:75px;top:236.4px;width:2px;height:1px;background:#575757;"></div>
<div class="a" style="left:65px;top:243.4px;width:12px;height:1px;background:#646464;"></div>
<div class="t" style="left:68.5px;top:243.2px;font-size:7px;color:#969696">6</div>
<div class="t" style="left:68.5px;top:249.8px;font-size:7px;color:#969696">0</div>
<div class="t" style="left:68.5px;top:256.4px;font-size:7px;color:#969696">0</div>
<div class="a" style="left:75px;top:250.3px;width:2px;height:1px;background:#575757;"></div>
<div class="a" style="left:73px;top:257.3px;width:4px;height:1px;background:#575757;"></div>
<div class="a" style="left:75px;top:264.2px;width:2px;height:1px;background:#575757;"></div>
<div class="a" style="left:65px;top:271.2px;width:12px;height:1px;background:#646464;"></div>
<div class="t" style="left:68.5px;top:271.0px;font-size:7px;color:#969696">8</div>
<div class="t" style="left:68.5px;top:277.6px;font-size:7px;color:#969696">0</div>
<div class="t" style="left:68.5px;top:284.2px;font-size:7px;color:#969696">0</div>
<div class="a" style="left:75px;top:278.1px;width:2px;height:1px;background:#575757;"></div>
<div class="a" style="left:73px;top:285.1px;width:4px;height:1px;background:#575757;"></div>
<div class="a" style="left:75px;top:292.0px;width:2px;height:1px;background:#575757;"></div>
<div class="a" style="left:65px;top:298.9px;width:12px;height:1px;background:#646464;"></div>
<div class="t" style="left:68.5px;top:298.8px;font-size:7px;color:#969696">1</div>
<div class="t" style="left:68.5px;top:305.4px;font-size:7px;color:#969696">0</div>
<div class="t" style="left:68.5px;top:311.9px;font-size:7px;color:#969696">0</div>
<div class="t" style="left:68.5px;top:318.6px;font-size:7px;color:#969696">0</div>
<div class="a" style="left:75px;top:305.9px;width:2px;height:1px;background:#575757;"></div>
<div class="a" style="left:73px;top:312.8px;width:4px;height:1px;background:#575757;"></div>
<div class="a" style="left:75px;top:319.8px;width:2px;height:1px;background:#575757;"></div>
<div class="a" style="left:65px;top:326.7px;width:12px;height:1px;background:#646464;"></div>
<div class="t" style="left:68.5px;top:326.5px;font-size:7px;color:#969696">1</div>
<div class="t" style="left:68.5px;top:333.1px;font-size:7px;color:#969696">2</div>
<div class="t" style="left:68.5px;top:339.7px;font-size:7px;color:#969696">0</div>
<div class="t" style="left:68.5px;top:346.3px;font-size:7px;color:#969696">0</div>
<div class="a" style="left:75px;top:333.7px;width:2px;height:1px;background:#575757;"></div>
<div class="a" style="left:73px;top:340.6px;width:4px;height:1px;background:#575757;"></div>
<div class="a" style="left:75px;top:347.6px;width:2px;height:1px;background:#575757;"></div>
<div class="a" style="left:65px;top:354.5px;width:12px;height:1px;background:#646464;"></div>
<div class="t" style="left:68.5px;top:354.3px;font-size:7px;color:#969696">1</div>
<div class="t" style="left:68.5px;top:360.9px;font-size:7px;color:#969696">4</div>
<div class="t" style="left:68.5px;top:367.5px;font-size:7px;color:#969696">0</div>
<div class="t" style="left:68.5px;top:374.1px;font-size:7px;color:#969696">0</div>
<div class="a" style="left:75px;top:361.5px;width:2px;height:1px;background:#575757;"></div>
<div class="a" style="left:73px;top:368.4px;width:4px;height:1px;background:#575757;"></div>
<div class="a" style="left:75px;top:375.4px;width:2px;height:1px;background:#575757;"></div>
<div class="a" style="left:65px;top:382.3px;width:12px;height:1px;background:#646464;"></div>
<div class="t" style="left:68.5px;top:382.1px;font-size:7px;color:#969696">1</div>
<div class="t" style="left:68.5px;top:388.7px;font-size:7px;color:#969696">6</div>
<div class="t" style="left:68.5px;top:395.3px;font-size:7px;color:#969696">0</div>
<div class="t" style="left:68.5px;top:401.9px;font-size:7px;color:#969696">0</div>
<div class="a" style="left:75px;top:389.3px;width:2px;height:1px;background:#575757;"></div>
<div class="a" style="left:73px;top:396.2px;width:4px;height:1px;background:#575757;"></div>
<div class="a" style="left:75px;top:403.2px;width:2px;height:1px;background:#575757;"></div>
<div class="a" style="left:65px;top:410.1px;width:12px;height:1px;background:#646464;"></div>
<div class="t" style="left:68.5px;top:409.9px;font-size:7px;color:#969696">1</div>
<div class="t" style="left:68.5px;top:416.5px;font-size:7px;color:#969696">8</div>
<div class="t" style="left:68.5px;top:423.1px;font-size:7px;color:#969696">0</div>
<div class="t" style="left:68.5px;top:429.7px;font-size:7px;color:#969696">0</div>
<div class="a" style="left:75px;top:417.1px;width:2px;height:1px;background:#575757;"></div>
<div class="a" style="left:73px;top:424.0px;width:4px;height:1px;background:#575757;"></div>
<div class="a" style="left:75px;top:431.0px;width:2px;height:1px;background:#575757;"></div>
<div class="a" style="left:65px;top:437.9px;width:12px;height:1px;background:#646464;"></div>
<div class="t" style="left:68.5px;top:437.7px;font-size:7px;color:#969696">2</div>
<div class="t" style="left:68.5px;top:444.3px;font-size:7px;color:#969696">0</div>
<div class="t" style="left:68.5px;top:450.9px;font-size:7px;color:#969696">0</div>
<div class="t" style="left:68.5px;top:457.5px;font-size:7px;color:#969696">0</div>
<div class="a" style="left:75px;top:444.8px;width:2px;height:1px;background:#575757;"></div>
<div class="a" style="left:73px;top:451.8px;width:4px;height:1px;background:#575757;"></div>
<div class="a" style="left:75px;top:458.7px;width:2px;height:1px;background:#575757;"></div>
<div class="a" style="left:65px;top:465.7px;width:12px;height:1px;background:#646464;"></div>
<div class="t" style="left:68.5px;top:465.5px;font-size:7px;color:#969696">2</div>
<div class="t" style="left:68.5px;top:472.1px;font-size:7px;color:#969696">2</div>
<div class="t" style="left:68.5px;top:478.7px;font-size:7px;color:#969696">0</div>
<div class="t" style="left:68.5px;top:485.3px;font-size:7px;color:#969696">0</div>
<div class="a" style="left:75px;top:472.6px;width:2px;height:1px;background:#575757;"></div>
<div class="a" style="left:73px;top:479.6px;width:4px;height:1px;background:#575757;"></div>
<div class="a" style="left:75px;top:486.5px;width:2px;height:1px;background:#575757;"></div>
<div class="a" style="left:65px;top:493.5px;width:12px;height:1px;background:#646464;"></div>
<div class="t" style="left:68.5px;top:493.3px;font-size:7px;color:#969696">2</div>
<div class="t" style="left:68.5px;top:499.9px;font-size:7px;color:#969696">4</div>
<div class="t" style="left:68.5px;top:506.5px;font-size:7px;color:#969696">0</div>
<div class="t" style="left:68.5px;top:513.1px;font-size:7px;color:#969696">0</div>
<div class="a" style="left:75px;top:500.4px;width:2px;height:1px;background:#575757;"></div>
<div class="a" style="left:73px;top:507.4px;width:4px;height:1px;background:#575757;"></div>
<div class="a" style="left:75px;top:514.3px;width:2px;height:1px;background:#575757;"></div>
<div class="a" style="left:65px;top:521.3px;width:12px;height:1px;background:#646464;"></div>
<div class="t" style="left:68.5px;top:521.1px;font-size:7px;color:#969696">2</div>
<div class="t" style="left:68.5px;top:527.7px;font-size:7px;color:#969696">6</div>
<div class="t" style="left:68.5px;top:534.3px;font-size:7px;color:#969696">0</div>
<div class="t" style="left:68.5px;top:540.9px;font-size:7px;color:#969696">0</div>
<div class="a" style="left:75px;top:528.2px;width:2px;height:1px;background:#575757;"></div>
<div class="a" style="left:73px;top:535.2px;width:4px;height:1px;background:#575757;"></div>
<div class="a" style="left:75px;top:542.1px;width:2px;height:1px;background:#575757;"></div>
<div class="a" style="left:65px;top:549.1px;width:12px;height:1px;background:#646464;"></div>
<div class="t" style="left:68.5px;top:548.9px;font-size:7px;color:#969696">2</div>
<div class="t" style="left:68.5px;top:555.5px;font-size:7px;color:#969696">8</div>
<div class="t" style="left:68.5px;top:562.1px;font-size:7px;color:#969696">0</div>
<div class="t" style="left:68.5px;top:568.7px;font-size:7px;color:#969696">0</div>
<div class="a" style="left:75px;top:556.0px;width:2px;height:1px;background:#575757;"></div>
<div class="a" style="left:73px;top:563.0px;width:4px;height:1px;background:#575757;"></div>
<div class="a" style="left:75px;top:569.9px;width:2px;height:1px;background:#575757;"></div>
<div class="a" style="left:65px;top:576.8px;width:12px;height:1px;background:#646464;"></div>
<div class="t" style="left:68.5px;top:576.6px;font-size:7px;color:#969696">3</div>
<div class="t" style="left:68.5px;top:583.2px;font-size:7px;color:#969696">0</div>
<div class="t" style="left:68.5px;top:589.8px;font-size:7px;color:#969696">0</div>
<div class="t" style="left:68.5px;top:596.4px;font-size:7px;color:#969696">0</div>
<div class="a" style="left:75px;top:583.8px;width:2px;height:1px;background:#575757;"></div>
<div class="a" style="left:73px;top:590.7px;width:4px;height:1px;background:#575757;"></div>
<div class="a" style="left:75px;top:597.7px;width:2px;height:1px;background:#575757;"></div>
<div class="a" style="left:65px;top:604.6px;width:12px;height:1px;background:#646464;"></div>
<div class="t" style="left:68.5px;top:604.4px;font-size:7px;color:#969696">3</div>
<div class="t" style="left:68.5px;top:611.0px;font-size:7px;color:#969696">2</div>
<div class="t" style="left:68.5px;top:617.6px;font-size:7px;color:#969696">0</div>
<div class="t" style="left:68.5px;top:624.2px;font-size:7px;color:#969696">0</div>
<div class="a" style="left:75px;top:611.6px;width:2px;height:1px;background:#575757;"></div>
<div class="a" style="left:73px;top:618.5px;width:4px;height:1px;background:#575757;"></div>
<div class="a" style="left:75px;top:625.5px;width:2px;height:1px;background:#575757;"></div>
<div class="a" style="left:65px;top:632.4px;width:12px;height:1px;background:#646464;"></div>
<div class="t" style="left:68.5px;top:632.2px;font-size:7px;color:#969696">3</div>
<div class="t" style="left:68.5px;top:638.8px;font-size:7px;color:#969696">4</div>
<div class="t" style="left:68.5px;top:645.4px;font-size:7px;color:#969696">0</div>
<div class="t" style="left:68.5px;top:652.0px;font-size:7px;color:#969696">0</div>
<div class="a" style="left:75px;top:639.4px;width:2px;height:1px;background:#575757;"></div>
<div class="a" style="left:73px;top:646.3px;width:4px;height:1px;background:#575757;"></div>
<div class="a" style="left:75px;top:653.3px;width:2px;height:1px;background:#575757;"></div>
<div class="a" style="left:65px;top:660.2px;width:12px;height:1px;background:#646464;"></div>
<div class="t" style="left:68.5px;top:660.0px;font-size:7px;color:#969696">3</div>
<div class="t" style="left:68.5px;top:666.6px;font-size:7px;color:#969696">6</div>
<div class="t" style="left:68.5px;top:673.2px;font-size:7px;color:#969696">0</div>
<div class="t" style="left:68.5px;top:679.8px;font-size:7px;color:#969696">0</div>
<div class="a" style="left:75px;top:667.2px;width:2px;height:1px;background:#575757;"></div>
<div class="a" style="left:73px;top:674.1px;width:4px;height:1px;background:#575757;"></div>
<div class="a" style="left:75px;top:681.1px;width:2px;height:1px;background:#575757;"></div>
<div class="a" style="left:65px;top:688.0px;width:12px;height:1px;background:#646464;"></div>
<div class="t" style="left:68.5px;top:687.8px;font-size:7px;color:#969696">3</div>
<div class="a" style="left:75px;top:695.0px;width:2px;height:1px;background:#575757;"></div>
<div class="a" style="left:64px;top:75.7px;width:14px;height:13px;background:#4b4b4b;"></div>
<div class="a" style="left:78px;top:75.7px;width:1px;height:13px;background:#5e5e5e;"></div>
<div class="a" style="left:879.5px;top:75px;width:11px;height:627px;background:#4a4a4a;"></div>
<div class="a" style="left:880.5px;top:267px;width:10px;height:236px;background:#676767;"></div>
<svg style="left:882px;top:81.5px" width="6" height="4"><path d="M0.5 3.3L3 0.8L5.5 3.3" stroke="#8a8a8a" stroke-width="0.9" fill="none"/></svg>
<svg style="left:882px;top:692px" width="6" height="4"><path d="M0.5 0.7L3 3.2L5.5 0.7" stroke="#8a8a8a" stroke-width="0.9" fill="none"/></svg>
<div class="a" style="left:64px;top:702px;width:830px;height:15px;background:#4f4f4f;"></div>
<div class="a" style="left:64px;top:702px;width:203px;height:15px;background:#535353;"></div>
<div class="t" style="left:67px;top:704.7px;font-size:9.5px;color:#f0f0f0;letter-spacing:-0.3px">17.31%</div>
<div class="t" style="left:106.5px;top:704.7px;font-size:9.5px;color:#dcdcdc;letter-spacing:-0.3px">2480 像素 x 3508 像素 (300 ppi)</div>
<svg style="left:241px;top:705px" width="5" height="8"><path d="M0.8 0.8L4 4L0.8 7.2" stroke="#b0b0b0" stroke-width="1" fill="none"/></svg>
<svg style="left:255px;top:705px" width="5" height="8"><path d="M4.2 0.8L1 4L4.2 7.2" stroke="#8a8a8a" stroke-width="1" fill="none"/></svg>
<div class="a" style="left:448px;top:704.5px;width:272px;height:10px;background:#696969;"></div>
<svg style="left:869.5px;top:706.5px" width="4" height="6"><path d="M0.7 0.6L3.2 3L0.7 5.4" stroke="#7a7a7a" stroke-width="0.9" fill="none"/></svg>
<div class="a" style="left:247.3px;top:159.7px;width:345.6px;height:487.9px;background:#f5f4f1;overflow:hidden">
<div class="a" style="left:54.4px;top:82.5px;width:249.5px;height:249.5px;background:#e63a1f;border-radius:50% 50% 50% 0"></div>
<div class="t" style="left:165.2px;top:114.3px;font-size:11.8px;color:#ffd21e;font-weight:700;font-family:'Noto Sans CJK SC','Liberation Sans',sans-serif;">NEW</div>
<div class="t" style="left:71.3px;top:154.3px;font-size:31px;color:#fff;font-weight:900;font-family:'Noto Sans CJK SC','Liberation Sans',sans-serif;letter-spacing:1.2px">全场</div>
<div class="t" style="left:71.3px;top:191.3px;font-size:31px;color:#fff;font-weight:900;font-family:'Noto Sans CJK SC','Liberation Sans',sans-serif;letter-spacing:1.2px">现货</div>
<div class="t" style="left:138.2px;top:135.8px;font-size:111px;color:#fff;font-weight:700;font-family:'Noto Sans CJK SC','Liberation Sans',sans-serif;">5</div>
<div class="t" style="left:200.2px;top:167.8px;font-size:57px;color:#fff;font-weight:900;font-family:'Noto Sans CJK SC','Liberation Sans',sans-serif;">折</div>
<div class="a" style="left:252.7px;top:208.1px;width:18.2px;height:18.2px;border-radius:50%;background:#fff"></div>
<div class="t" style="left:256.4px;top:211.7px;font-size:10.8px;color:#e63a1f;font-weight:900;font-family:'Noto Sans CJK SC','Liberation Sans',sans-serif;">起</div>
<div class="t" style="left:201.1px;top:228.6px;font-size:15px;color:#fff;font-weight:900;font-family:'Noto Sans CJK SC','Liberation Sans',sans-serif;">SALE OFF</div>
<div class="t" style="left:70.2px;top:230.3px;font-size:6.8px;color:#fff;font-weight:900;font-family:'Noto Sans CJK SC','Liberation Sans',sans-serif;">DOUBLE ELEVEN</div>
<div class="t" style="left:70.2px;top:238.8px;font-size:6.8px;color:#ffd9d0;font-weight:400;font-family:'Noto Sans CJK SC','Liberation Sans',sans-serif;">TOP GOODS</div>
<div class="t" style="left:70.7px;top:266.3px;font-size:19.6px;color:#fff;font-weight:700;font-family:'Noto Sans CJK SC','Liberation Sans',sans-serif;letter-spacing:1.1px">618尖货</div>
<div class="t" style="left:71.2px;top:292.8px;font-size:10.5px;color:#fff;font-weight:500;font-family:'Noto Sans CJK SC','Liberation Sans',sans-serif;">满500元减100元</div>
<div class="t" style="left:71.2px;top:305.3px;font-size:10.5px;color:#fff;font-weight:500;font-family:'Noto Sans CJK SC','Liberation Sans',sans-serif;">满800元减150元</div>
<div class="t" style="left:53.5px;top:386.5px;font-size:13.8px;color:#e63a1f;font-weight:700;font-family:'Noto Sans CJK SC','Liberation Sans',sans-serif;">男装/女装/童装</div>
<div class="t" style="left:53.3px;top:411.5px;font-size:8.9px;color:#e63a1f;font-weight:300;font-family:'Noto Sans CJK SC','Liberation Sans',sans-serif;">MEN&quot;SAND WOMEN&#39;S</div>
<div class="t" style="left:53.3px;top:421.9px;font-size:8.9px;color:#e63a1f;font-weight:300;font-family:'Noto Sans CJK SC','Liberation Sans',sans-serif;">CHILDREN&quot;S WEAR</div>
</div>
<div class="a" style="left:894px;top:52px;width:262px;height:666px;background:#535353;"></div>
<div class="a" style="left:890.5px;top:52px;width:4.5px;height:666px;background:#414141;"></div>
<div class="a" style="left:895px;top:52px;width:261px;height:10px;background:#424242;"></div>
<svg style="left:914px;top:54.5px" width="7" height="5"><path d="M3 0.3L0.8 2.5L3 4.7M6.3 0.3L4.1 2.5L6.3 4.7" stroke="#dcdcdc" stroke-width="1" fill="none"/></svg>
<svg style="left:1144px;top:54.5px" width="7" height="5"><path d="M0.7 0.3L2.9 2.5L0.7 4.7M4 0.3L6.2 2.5L4 4.7" stroke="#dcdcdc" stroke-width="1" fill="none"/></svg>
<div class="a" style="left:924.5px;top:62px;width:2.5px;height:656px;background:#3a3a3a;"></div>
<div class="t" style="left:904px;top:73px;font-size:14.5px;color:#e4e4e4;">A</div>
<div class="a" style="left:915px;top:72px;width:1px;height:15px;background:#e4e4e4;"></div>
<svg style="left:905px;top:96.4px" width="9" height="12" viewBox="0 0 9 12"><path d="M4 0H9V1.3H8V12H6.7V1.3H5.3V12H4V6.5C1.8 6.5 0.2 5.2 0.2 3.2C0.2 1.3 1.8 0 4 0Z" fill="#e4e4e4"/></svg>
<div class="a" style="left:896px;top:116px;width:28px;height:1px;background:#3f3f3f;"></div>
<div class="a" style="left:927px;top:62px;width:229px;height:22px;background:#424242;"></div>
<div class="a" style="left:927px;top:62px;width:32px;height:22px;background:#535353;"></div>
<div class="t" style="left:934px;top:67px;font-size:9.5px;color:#f0f0f0;font-weight:bold">颜色</div>
<div class="t" style="left:966px;top:67px;font-size:9.5px;color:#a6a6a6;">色板</div>
<div class="t" style="left:998px;top:67px;font-size:9.5px;color:#a6a6a6;">渐变</div>
<div class="t" style="left:1030px;top:67px;font-size:9.5px;color:#a6a6a6;">图案</div>
<div class="a" style="left:1143px;top:69.5px;width:9px;height:1px;background:#9c9c9c;"></div>
<div class="a" style="left:1143px;top:71.5px;width:9px;height:1px;background:#9c9c9c;"></div>
<div class="a" style="left:1143px;top:73.5px;width:9px;height:1px;background:#9c9c9c;"></div>
<div class="a" style="left:1143px;top:75.5px;width:9px;height:1px;background:#9c9c9c;"></div>
<div class="a" style="left:943px;top:101px;width:15px;height:15px;background:#ffffff;"></div>
<div class="a" style="left:935px;top:93px;width:15px;height:15px;background:#040404;border:1px solid #dedede;box-shadow:0 0 0 1px #333"></div>
<div class="t" style="left:963.7px;top:95.8px;font-size:9.5px;color:#d8d8d8;font-weight:bold">H</div>
<div class="t" style="left:964px;top:116.8px;font-size:9.5px;color:#d8d8d8;font-weight:bold">S</div>
<div class="t" style="left:964px;top:137.8px;font-size:9.5px;color:#d8d8d8;font-weight:bold">B</div>
<div class="a" style="left:977px;top:96px;width:116px;height:5px;background:linear-gradient(to right,#f00 0%,#ff0 16.6%,#0f0 33.3%,#0ff 50%,#00f 66.6%,#f0f 83.3%,#f00 100%)"></div>
<div class="a" style="left:977px;top:117px;width:116px;height:5px;background:#050505"></div>
<div class="a" style="left:977px;top:138px;width:116px;height:5px;background:linear-gradient(to right,#000,#fff)"></div>
<svg style="left:973.5px;top:102.5px" width="8" height="7" viewBox="0 0 8 7"><path d="M4 0.3L7.6 5.2V6.7H0.4V5.2Z" fill="#f4f4f4"/></svg>
<svg style="left:973.5px;top:123.5px" width="8" height="7" viewBox="0 0 8 7"><path d="M4 0.3L7.6 5.2V6.7H0.4V5.2Z" fill="#f4f4f4"/></svg>
<svg style="left:976px;top:144.5px" width="8" height="7" viewBox="0 0 8 7"><path d="M4 0.3L7.6 5.2V6.7H0.4V5.2Z" fill="#f4f4f4"/></svg>
<div class="a" style="left:1097px;top:93px;width:31px;height:15px;background:#474747;border:1px solid #5c5c5c"></div>
<div class="t" style="left:1100px;top:95.8px;font-size:9.5px;color:#e8e8e8;">0</div>
<div class="t" style="left:1133.5px;top:96px;font-size:11px;color:#d0d0d0;">°</div>
<div class="a" style="left:1097px;top:114px;width:31px;height:15px;background:#474747;border:1px solid #5c5c5c"></div>
<div class="t" style="left:1100px;top:116.8px;font-size:9.5px;color:#e8e8e8;">0</div>
<div class="t" style="left:1132px;top:116.8px;font-size:9.5px;color:#d0d0d0;">%</div>
<div class="a" style="left:1097px;top:135px;width:31px;height:15px;background:#474747;border:1px solid #5c5c5c"></div>
<div class="t" style="left:1100px;top:137.8px;font-size:9.5px;color:#e8e8e8;">2</div>
<div class="t" style="left:1132px;top:137.8px;font-size:9.5px;color:#d0d0d0;">%</div>
<div class="a" style="left:974.8000000000001px;top:161.6px;width:132.8px;height:132.8px;border-radius:50%;background:conic-gradient(from 90deg,#f00,#f0f,#00f,#0ff,#0f0,#ff0,#f00)"></div>
<div class="a" style="left:990.4000000000001px;top:177.2px;width:101.6px;height:101.6px;border-radius:50%;background:#535353"></div>
<svg style="left:0;top:0" width="1156" height="720"><defs><linearGradient id="tg1" x1="1015.8000000000001" y1="184.0072" x2="1015.8000000000001" y2="271.9928" gradientUnits="userSpaceOnUse"><stop offset="0" stop-color="#fff"/><stop offset="1" stop-color="#000"/></linearGradient><linearGradient id="tg2" x1="1015.8000000000001" y1="228.0" x2="1092.0" y2="228.0" gradientUnits="userSpaceOnUse"><stop offset="0" stop-color="#f00" stop-opacity="0"/><stop offset="1" stop-color="#f00" stop-opacity="1"/></linearGradient></defs><path d="M1015.8000000000001 184.0072L1092.0 228.0L1015.8000000000001 271.9928Z" fill="url(#tg1)"/><path d="M1015.8000000000001 184.0072L1092.0 228.0L1015.8000000000001 271.9928Z" fill="url(#tg2)"/><circle cx="1100" cy="227.8" r="4" stroke="#fff" stroke-width="1.1" fill="none"/><circle cx="1016.6" cy="268.4" r="4" stroke="#fff" stroke-width="1.1" fill="none"/></svg>
<svg style="left:1130px;top:279px" width="10" height="10" viewBox="0 0 10 10"><rect x="0.6" y="0.6" width="8.8" height="8.8" stroke="#d0d0d0" stroke-width="1.1" fill="none"/><path d="M5 2.5V7.5M2.5 5H7.5" stroke="#d0d0d0" stroke-width="1.2"/></svg>
<div class="a" style="left:927px;top:304px;width:229px;height:3px;background:#3c3c3c;"></div>
<div class="a" style="left:927px;top:307px;width:229px;height:23px;background:#444444;"></div>
<div class="a" style="left:927px;top:307px;width:32px;height:23px;background:#535353;"></div>
<div class="t" style="left:934px;top:312px;font-size:9.5px;color:#f0f0f0;font-weight:bold">图层</div>
<div class="t" style="left:966px;top:312px;font-size:9.5px;color:#a6a6a6;">路径</div>
<div class="t" style="left:998px;top:312px;font-size:9.5px;color:#a6a6a6;">通道</div>
<div class="a" style="left:1143px;top:314.5px;width:9px;height:1px;background:#9c9c9c;"></div>
<div class="a" style="left:1143px;top:316.5px;width:9px;height:1px;background:#9c9c9c;"></div>
<div class="a" style="left:1143px;top:318.5px;width:9px;height:1px;background:#9c9c9c;"></div>
<div class="a" style="left:1143px;top:320.5px;width:9px;height:1px;background:#9c9c9c;"></div>
<div class="a" style="left:930px;top:337px;width:68px;height:16px;background:#464646;border-radius:2px"></div>
<svg style="left:936px;top:340px" width="9" height="9" viewBox="0 0 9 9"><circle cx="3.6" cy="3.6" r="2.7" stroke="#dcdcdc" stroke-width="1.2" fill="none"/><path d="M5.6 5.6L8.5 8.5" stroke="#dcdcdc" stroke-width="1.3"/></svg>
<div class="t" style="left:948px;top:340px;font-size:9.5px;color:#f0f0f0;font-weight:bold">类型</div>
<svg style="left:989px;top:343px" width="7" height="5"><path d="M0.5 0.5L3.5 3.5L6.5 0.5" stroke="#a8a8a8" stroke-width="1.1" fill="none"/></svg>
<svg style="left:1012px;top:340px" width="10" height="9" viewBox="0 0 10 9"><rect x="0.5" y="0.5" width="9" height="8" stroke="#dcdcdc" stroke-width="1" fill="none"/><path d="M1.5 7L4 4L5.5 5.5L7 4.5L8.5 7Z" fill="#dcdcdc"/></svg>
<svg style="left:1031px;top:340px" width="10" height="10" viewBox="0 0 10 10"><circle cx="5" cy="5" r="4.2" stroke="#dcdcdc" stroke-width="1.1" fill="none"/><path d="M8 2A4.2 4.2 0 0 1 2 8Z" fill="#dcdcdc"/></svg>
<div class="t" style="left:1052px;top:338px;font-family:'Liberation Serif',serif;font-weight:bold;font-size:12.5px;color:#dcdcdc">T</div>
<svg style="left:1070px;top:340px" width="10" height="10" viewBox="0 0 10 10"><rect x="1.5" y="1.5" width="7" height="7" stroke="#dcdcdc" stroke-width="1.1" fill="none"/><g fill="#dcdcdc"><rect x="0" y="0" width="3" height="3"/><rect x="7" y="0" width="3" height="3"/><rect x="0" y="7" width="3" height="3"/><rect x="7" y="7" width="3" height="3"/></g></svg>
<svg style="left:1090px;top:339px" width="9" height="11" viewBox="0 0 9 11"><path d="M2.5 0.6H6L8.4 3V8H2.5Z" stroke="#dcdcdc" stroke-width="1" fill="none"/><rect x="0.3" y="6" width="4.5" height="4.7" fill="#dcdcdc"/></svg>
<div class="a" style="left:1113px;top:340px;width:6px;height:11px;background:#3c3c3c;border-radius:3px"></div>
<div class="a" style="left:1112.5px;top:337.5px;width:7px;height:7px;background:#d4d4d4;border-radius:50%"></div>
<div class="a" style="left:927px;top:355px;width:229px;height:1px;background:#484848;"></div>
<div class="a" style="left:930px;top:360px;width:93px;height:16px;background:#464646;border-radius:2px"></div>
<div class="t" style="left:936.5px;top:363px;font-size:9.5px;color:#f0f0f0;font-weight:500">穿透</div>
<svg style="left:1014.5px;top:366px" width="7" height="5"><path d="M0.5 0.5L3.5 3.5L6.5 0.5" stroke="#a8a8a8" stroke-width="1.1" fill="none"/></svg>
<div class="t" style="left:1029.5px;top:363px;font-size:9.5px;color:#d8d8d8;">不透明度:</div>
<div class="a" style="left:1076px;top:360px;width:30px;height:16px;background:#464646;border:1px solid #5a5a5a"></div>
<div class="t" style="left:1079px;top:362.7px;font-size:9.5px;color:#e8e8e8;">100%</div>
<div class="a" style="left:1108px;top:360px;width:10px;height:16px;background:#4a4a4a;border:1px solid #5e5e5e"></div>
<svg style="left:1110px;top:366px" width="6" height="4"><path d="M0.5 0.5L3 3L5.5 0.5" stroke="#a8a8a8" stroke-width="1" fill="none"/></svg>
<div class="a" style="left:927px;top:378px;width:229px;height:1px;background:#484848;"></div>
<div class="t" style="left:932px;top:385.8px;font-size:9.5px;color:#d8d8d8;">锁定:</div>
<svg style="left:962px;top:386px" width="9" height="9" viewBox="0 0 9 9"><rect x="0.5" y="0.5" width="8" height="8" stroke="#9a9a9a" stroke-width="0.8" fill="none"/><g fill="#a8a8a8"><rect x="1" y="1" width="2.3" height="2.3"/><rect x="5.6" y="1" width="2.3" height="2.3"/><rect x="3.3" y="3.3" width="2.3" height="2.3"/><rect x="1" y="5.6" width="2.3" height="2.3"/><rect x="5.6" y="5.6" width="2.3" height="2.3"/></g></svg>
<svg style="left:979px;top:385px" width="11" height="11" viewBox="0 0 11 11"><path d="M10.5 0.5C8.5 1.8 6.5 3.8 5 5.6L6.2 6.8C8 5.2 9.7 3 10.5 0.5Z" fill="#8c8c8c"/><path d="M4.3 6.2C3 6.2 2.5 7.2 2.4 8.2C2.3 9 1.8 9.6 1 9.9C2.6 10.4 4.5 10 5.1 8.6C5.5 7.7 5.1 6.6 4.3 6.2Z" fill="#8c8c8c"/></svg>
<svg style="left:996px;top:385px" width="11" height="11" viewBox="0 0 14 14"><path d="M7 0L9.4 2.9H7.8V6.2H11.1V4.6L14 7L11.1 9.4V7.8H7.8V11.1H9.4L7 14L4.6 11.1H6.2V7.8H2.9V9.4L0 7L2.9 4.6V6.2H6.2V2.9H4.6Z" fill="#8c8c8c"/></svg>
<svg style="left:1014px;top:385px" width="11" height="11" viewBox="0 0 11 11"><path d="M2.5 0.5V8.5H10.5M0.5 2.5H8.5V10.5" stroke="#c8c8c8" stroke-width="1.1" fill="none"/><path d="M8 0.5L10.5 3" stroke="#c8c8c8" stroke-width="1"/></svg>
<svg style="left:1033.5px;top:385px" width="9" height="11" viewBox="0 0 9 11"><rect x="0.3" y="4.6" width="8.4" height="6" rx="0.6" fill="#dcdcdc"/><path d="M2.2 4.8V3.2A2.3 2.3 0 0 1 6.8 3.2V4.8" stroke="#dcdcdc" stroke-width="1.2" fill="none"/></svg>
<div class="t" style="left:1049px;top:385.8px;font-size:9.5px;color:#d8d8d8;">填充:</div>
<div class="a" style="left:1076px;top:382px;width:30px;height:16px;background:#464646;border:1px solid #5a5a5a"></div>
<div class="t" style="left:1079px;top:385.5px;font-size:9.5px;color:#e8e8e8;">100%</div>
<div class="a" style="left:1108px;top:382px;width:10px;height:16px;background:#4a4a4a;border:1px solid #5e5e5e"></div>
<svg style="left:1110px;top:388px" width="6" height="4"><path d="M0.5 0.5L3 3L5.5 0.5" stroke="#a8a8a8" stroke-width="1" fill="none"/></svg>
<div class="a" style="left:927px;top:403px;width:229px;height:293px;background:#4d4d4d;"></div>
<div class="a" style="left:927px;top:404px;width:216px;height:20px;background:#4c4c4c;"></div>
<div class="a" style="left:952px;top:404px;width:191px;height:20px;background:#696969;"></div>
<div class="a" style="left:927px;top:423.5px;width:216px;height:1px;background:#4a4a4a;"></div>
<div class="a" style="left:927px;top:425px;width:216px;height:31px;background:#535353;"></div>
<div class="a" style="left:927px;top:455.5px;width:216px;height:1px;background:#484848;"></div>
<svg style="left:933px;top:411px" width="12" height="8" viewBox="0 0 12 8"><path d="M0.3 4C2 1.2 4 0.3 6 0.3C8 0.3 10 1.2 11.7 4C10 6.8 8 7.7 6 7.7C4 7.7 2 6.8 0.3 4Z" fill="#e4e4e4"/><circle cx="6" cy="4" r="2.4" fill="#535353"/><circle cx="6" cy="4" r="1.2" fill="#e4e4e4"/></svg>
<svg style="left:933px;top:437px" width="12" height="8" viewBox="0 0 12 8"><path d="M0.3 4C2 1.2 4 0.3 6 0.3C8 0.3 10 1.2 11.7 4C10 6.8 8 7.7 6 7.7C4 7.7 2 6.8 0.3 4Z" fill="#e4e4e4"/><circle cx="6" cy="4" r="2.4" fill="#535353"/><circle cx="6" cy="4" r="1.2" fill="#e4e4e4"/></svg>
<svg style="left:955px;top:411px" width="5" height="8"><path d="M0.8 0.8L4 4L0.8 7.2" stroke="#c0c0c0" stroke-width="1" fill="none"/></svg>
<svg style="left:964px;top:410px" width="12" height="10" viewBox="0 0 12 10"><path d="M0.3 0.5H4.5L5.6 1.8H11.7V9.6H0.3Z" fill="#e0e0e0"/></svg>
<div class="t" style="left:985.5px;top:410px;font-size:9.5px;color:#f0f0f0;">组 1</div>
<div class="a" style="left:955px;top:429px;width:18px;height:24px;background:#ffffff;"></div>
<div class="t" style="left:981.5px;top:436px;font-size:9.5px;color:#f0f0f0;">背景</div>
<svg style="left:1121px;top:435.5px" width="9" height="11" viewBox="0 0 9 11"><rect x="0.8" y="4.8" width="7.4" height="5.6" rx="0.5" stroke="#dcdcdc" stroke-width="1.1" fill="none"/><path d="M2.4 4.8V3.2A2.1 2.1 0 0 1 6.6 3.2V4.8" stroke="#dcdcdc" stroke-width="1.1" fill="none"/><rect x="4" y="6.6" width="1" height="2" fill="#dcdcdc"/></svg>
<div class="a" style="left:927px;top:696px;width:229px;height:22px;background:#535353;"></div>
<div class="a" style="left:927px;top:695px;width:229px;height:1px;background:#434343;"></div>
<svg style="left:992px;top:702px" width="13" height="6" viewBox="0 0 13 6"><rect x="0.6" y="0.6" width="6.3" height="4.8" rx="2.4" stroke="#8a8a8a" stroke-width="1.1" fill="none"/><rect x="6.1" y="0.6" width="6.3" height="4.8" rx="2.4" stroke="#8a8a8a" stroke-width="1.1" fill="none"/></svg>
<div class="t" style="left:1015.5px;top:698px;font-size:12px;font-style:italic;color:#dcdcdc;font-family:'Liberation Sans',sans-serif;letter-spacing:-0.3px">fx</div>
<svg style="left:1024.5px;top:710px" width="3" height="2"><path d="M0 0H3L1.5 2Z" fill="#d0d0d0"/></svg>
<svg style="left:1036px;top:700.5px" width="11" height="9" viewBox="0 0 11 9"><rect x="0" y="0" width="11" height="9" rx="0.6" fill="#dcdcdc"/><circle cx="5.5" cy="4.5" r="2.6" fill="#4a4a4a"/></svg>
<svg style="left:1058.5px;top:700px" width="10" height="10" viewBox="0 0 10 10"><circle cx="5" cy="5" r="4.2" stroke="#dcdcdc" stroke-width="1.1" fill="none"/><path d="M8 2A4.2 4.2 0 0 1 2 8Z" fill="#dcdcdc"/></svg>
<svg style="left:1067.5px;top:710px" width="3" height="2"><path d="M0 0H3L1.5 2Z" fill="#d0d0d0"/></svg>
<svg style="left:1079.5px;top:700px" width="11" height="9" viewBox="0 0 12 10"><path d="M0.3 0.5H4.5L5.6 1.8H11.7V9.6H0.3Z" fill="#dcdcdc"/></svg>
<svg style="left:1102px;top:700px" width="10" height="10" viewBox="0 0 10 10"><rect x="0.6" y="0.6" width="8.8" height="8.8" stroke="#dcdcdc" stroke-width="1.2" fill="none"/><path d="M5 2.6V7.4M2.6 5H7.4" stroke="#dcdcdc" stroke-width="1.3"/></svg>
<svg style="left:1123px;top:699px" width="10" height="12" viewBox="0 0 10 12"><path d="M0.3 2.6H9.7M3.5 2.4V1H6.5V2.4" stroke="#dcdcdc" stroke-width="1.1" fill="none"/><path d="M1.5 3.2H8.5V11.2H1.5Z" stroke="#dcdcdc" stroke-width="1.1" fill="none"/><path d="M3.8 4.8V9.6M6.2 4.8V9.6" stroke="#dcdcdc" stroke-width="0.9"/></svg>
<div class="a" style="left:0px;top:715px;width:1156px;height:1px;background:#3c3c3c;"></div>
<div class="a" style="left:0px;top:716px;width:1156px;height:2px;background:#555957;"></div>
<div class="a" style="left:0px;top:718px;width:1156px;height:1px;background:#33433b;"></div>
<div class="a" style="left:0px;top:719px;width:1156px;height:1px;background:#b6cdbf;"></div>
<div class="a" style="left:2px;top:0px;width:2px;height:718px;background:#595d5a;"></div>
<div class="a" style="left:4px;top:23px;width:1px;height:693px;background:#424242;"></div>
<div class="a" style="left:0px;top:0px;width:1px;height:720px;background:#a9c3b2;"></div>
<div class="a" style="left:1px;top:0px;width:1px;height:719px;background:#33463c;"></div>
<div class="a" style="left:0px;top:0px;width:1156px;height:1px;background:#454545;"></div>
<div class="a" style="left:1152px;top:1px;width:4px;height:715px;background:#494949;"></div>
</body></html>
